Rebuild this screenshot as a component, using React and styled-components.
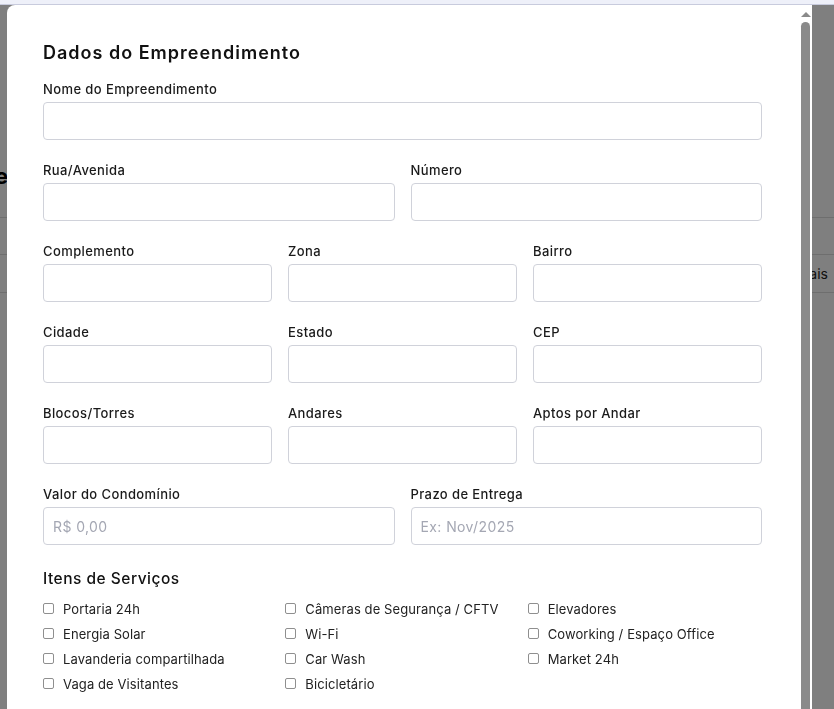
import styled, { createGlobalStyle } from 'styled-components';

const GlobalStyle = createGlobalStyle`
  * {
    box-sizing: border-box;
  }
  body {
    margin: 0;
    font-family: 'Inter', 'Liberation Sans', sans-serif;
    color: #1a1a1a;
  }
`;

const Page = styled.div`
  height: 100vh;
  overflow: hidden;
  background: #ffffff;
`;

const TopBar = styled.div`
  height: 5px;
  background: #eef0f9;
  border-bottom: 1px solid #c8cbdd;
`;

const PageHeader = styled.div`
  height: 213px;
  display: flex;
  align-items: flex-end;
  padding-bottom: 28px;
  border-bottom: 1px solid #dcdcdc;
`;

const PageTitleClip = styled.div`
  width: 8px;
  display: flex;
  justify-content: flex-end;
  overflow: hidden;
  white-space: nowrap;
`;

const PageTitle = styled.h1`
  margin: 0;
  font-size: 22px;
  font-weight: 700;
  color: #000;
`;

const PageRow = styled.div`
  height: ${(p) => p.$height}px;
  display: flex;
  align-items: center;
  justify-content: flex-end;
  padding-right: 6px;
  border-bottom: 1px solid #dcdcdc;
  font-size: 14px;
  color: #222;
`;

const Overlay = styled.div`
  position: fixed;
  top: 5px;
  left: 0;
  right: 0;
  bottom: 0;
  background: rgba(0, 0, 0, 0.5);
  overflow: hidden;
`;

const Modal = styled.div`
  margin-left: 7px;
  width: 805px;
  height: calc(100vh + 60px);
  display: flex;
  background: #ffffff;
  border-radius: 8px 0 0 0;
  overflow: hidden;
`;

const ModalBody = styled.div`
  flex: 1;
  min-width: 0;
  padding: 36px 35px 36px 36px;
`;

const ScrollBar = styled.div`
  width: 15px;
  display: flex;
  flex-direction: column;
  background: #ffffff;
`;

const ScrollArrow = styled.div`
  height: 15px;
  display: flex;
  align-items: center;
  justify-content: center;
  padding: 3px 0 0 2px;

  &::before {
    content: '';
    width: 0;
    height: 0;
    border-left: 5px solid transparent;
    border-right: 5px solid transparent;
    border-bottom: 5px solid #8a8a8a;
  }
`;

const ScrollThumb = styled.div`
  flex: 1;
  margin: 2px 2px 0 4px;
  background: #8a8a8a;
  border-radius: 5px;
`;

const Title = styled.h2`
  margin: 0 0 16px;
  font-size: 18px;
  line-height: 24px;
  font-weight: 600;
  letter-spacing: 1px;
  color: #111;
`;

const Rows = styled.div`
  display: flex;
  flex-direction: column;
  gap: 22px;
`;

const Row = styled.div`
  display: grid;
  grid-template-columns: repeat(${(p) => p.$cols}, 1fr);
  gap: 16px;
`;

const Field = styled.label`
  display: flex;
  flex-direction: column;
  gap: 5px;
`;

const Label = styled.span`
  font-size: 13px;
  line-height: 16px;
  font-weight: 500;
  letter-spacing: 0.4px;
  color: #1a1a1a;
`;

const Input = styled.input`
  height: 38px;
  width: 100%;
  border: 1px solid #d0d2da;
  border-radius: 4px;
  padding: 0 9px;
  font-family: inherit;
  font-size: 14px;
  letter-spacing: 0.4px;
  color: #222;
  background: #fff;
  outline: none;

  &::placeholder {
    color: #a4a7b3;
  }
`;

const SectionTitle = styled.h3`
  margin: 24px 0 11px;
  font-size: 15.5px;
  line-height: 20px;
  font-weight: 500;
  letter-spacing: 0.5px;
  color: #111;
`;

const CheckGrid = styled.div`
  display: grid;
  grid-template-columns: repeat(3, 1fr);
  column-gap: 8px;
  row-gap: 8px;
`;

const CheckItem = styled.label`
  display: flex;
  align-items: center;
  gap: 9px;
  height: 17px;
  font-size: 13px;
  letter-spacing: 0.1px;
  color: #222;
`;

const Check = styled.input`
  appearance: none;
  flex: none;
  width: 11px;
  height: 11px;
  margin: 0;
  border: 1px solid #8f8f8f;
  border-radius: 2px;
  background: #fff;
`;

const rows = [
  [{ label: 'Nome do Empreendimento' }],
  [{ label: 'Rua/Avenida' }, { label: 'Número' }],
  [{ label: 'Complemento' }, { label: 'Zona' }, { label: 'Bairro' }],
  [{ label: 'Cidade' }, { label: 'Estado' }, { label: 'CEP' }],
  [{ label: 'Blocos/Torres' }, { label: 'Andares' }, { label: 'Aptos por Andar' }],
  [
    { label: 'Valor do Condomínio', placeholder: 'R$ 0,00' },
    { label: 'Prazo de Entrega', placeholder: 'Ex: Nov/2025' },
  ],
];

const services = [
  'Portaria 24h',
  'Câmeras de Segurança / CFTV',
  'Elevadores',
  'Energia Solar',
  'Wi-Fi',
  'Coworking / Espaço Office',
  'Lavanderia compartilhada',
  'Car Wash',
  'Market 24h',
  'Vaga de Visitantes',
  'Bicicletário',
];

export default function App() {
  return (
    <>
      <GlobalStyle />
      <Page>
        <TopBar />
        <PageHeader>
          <PageTitleClip>
            <PageTitle>Empreendimentos em Destaque</PageTitle>
          </PageTitleClip>
        </PageHeader>
        <PageRow $height={37} />
        <PageRow $height={38}>Ver mais</PageRow>
      </Page>
      <Overlay>
        <Modal>
          <ModalBody>
            <Title>Dados do Empreendimento</Title>
            <Rows>
              {rows.map((row, i) => (
                <Row key={i} $cols={row.length}>
                  {row.map((f) => (
                    <Field key={f.label}>
                      <Label>{f.label}</Label>
                      <Input placeholder={f.placeholder} />
                    </Field>
                  ))}
                </Row>
              ))}
            </Rows>
            <SectionTitle>Itens de Serviços</SectionTitle>
            <CheckGrid>
              {services.map((s) => (
                <CheckItem key={s}>
                  <Check type="checkbox" />
                  {s}
                </CheckItem>
              ))}
            </CheckGrid>
          </ModalBody>
          <ScrollBar>
            <ScrollArrow />
            <ScrollThumb />
          </ScrollBar>
        </Modal>
      </Overlay>
    </>
  );
}
